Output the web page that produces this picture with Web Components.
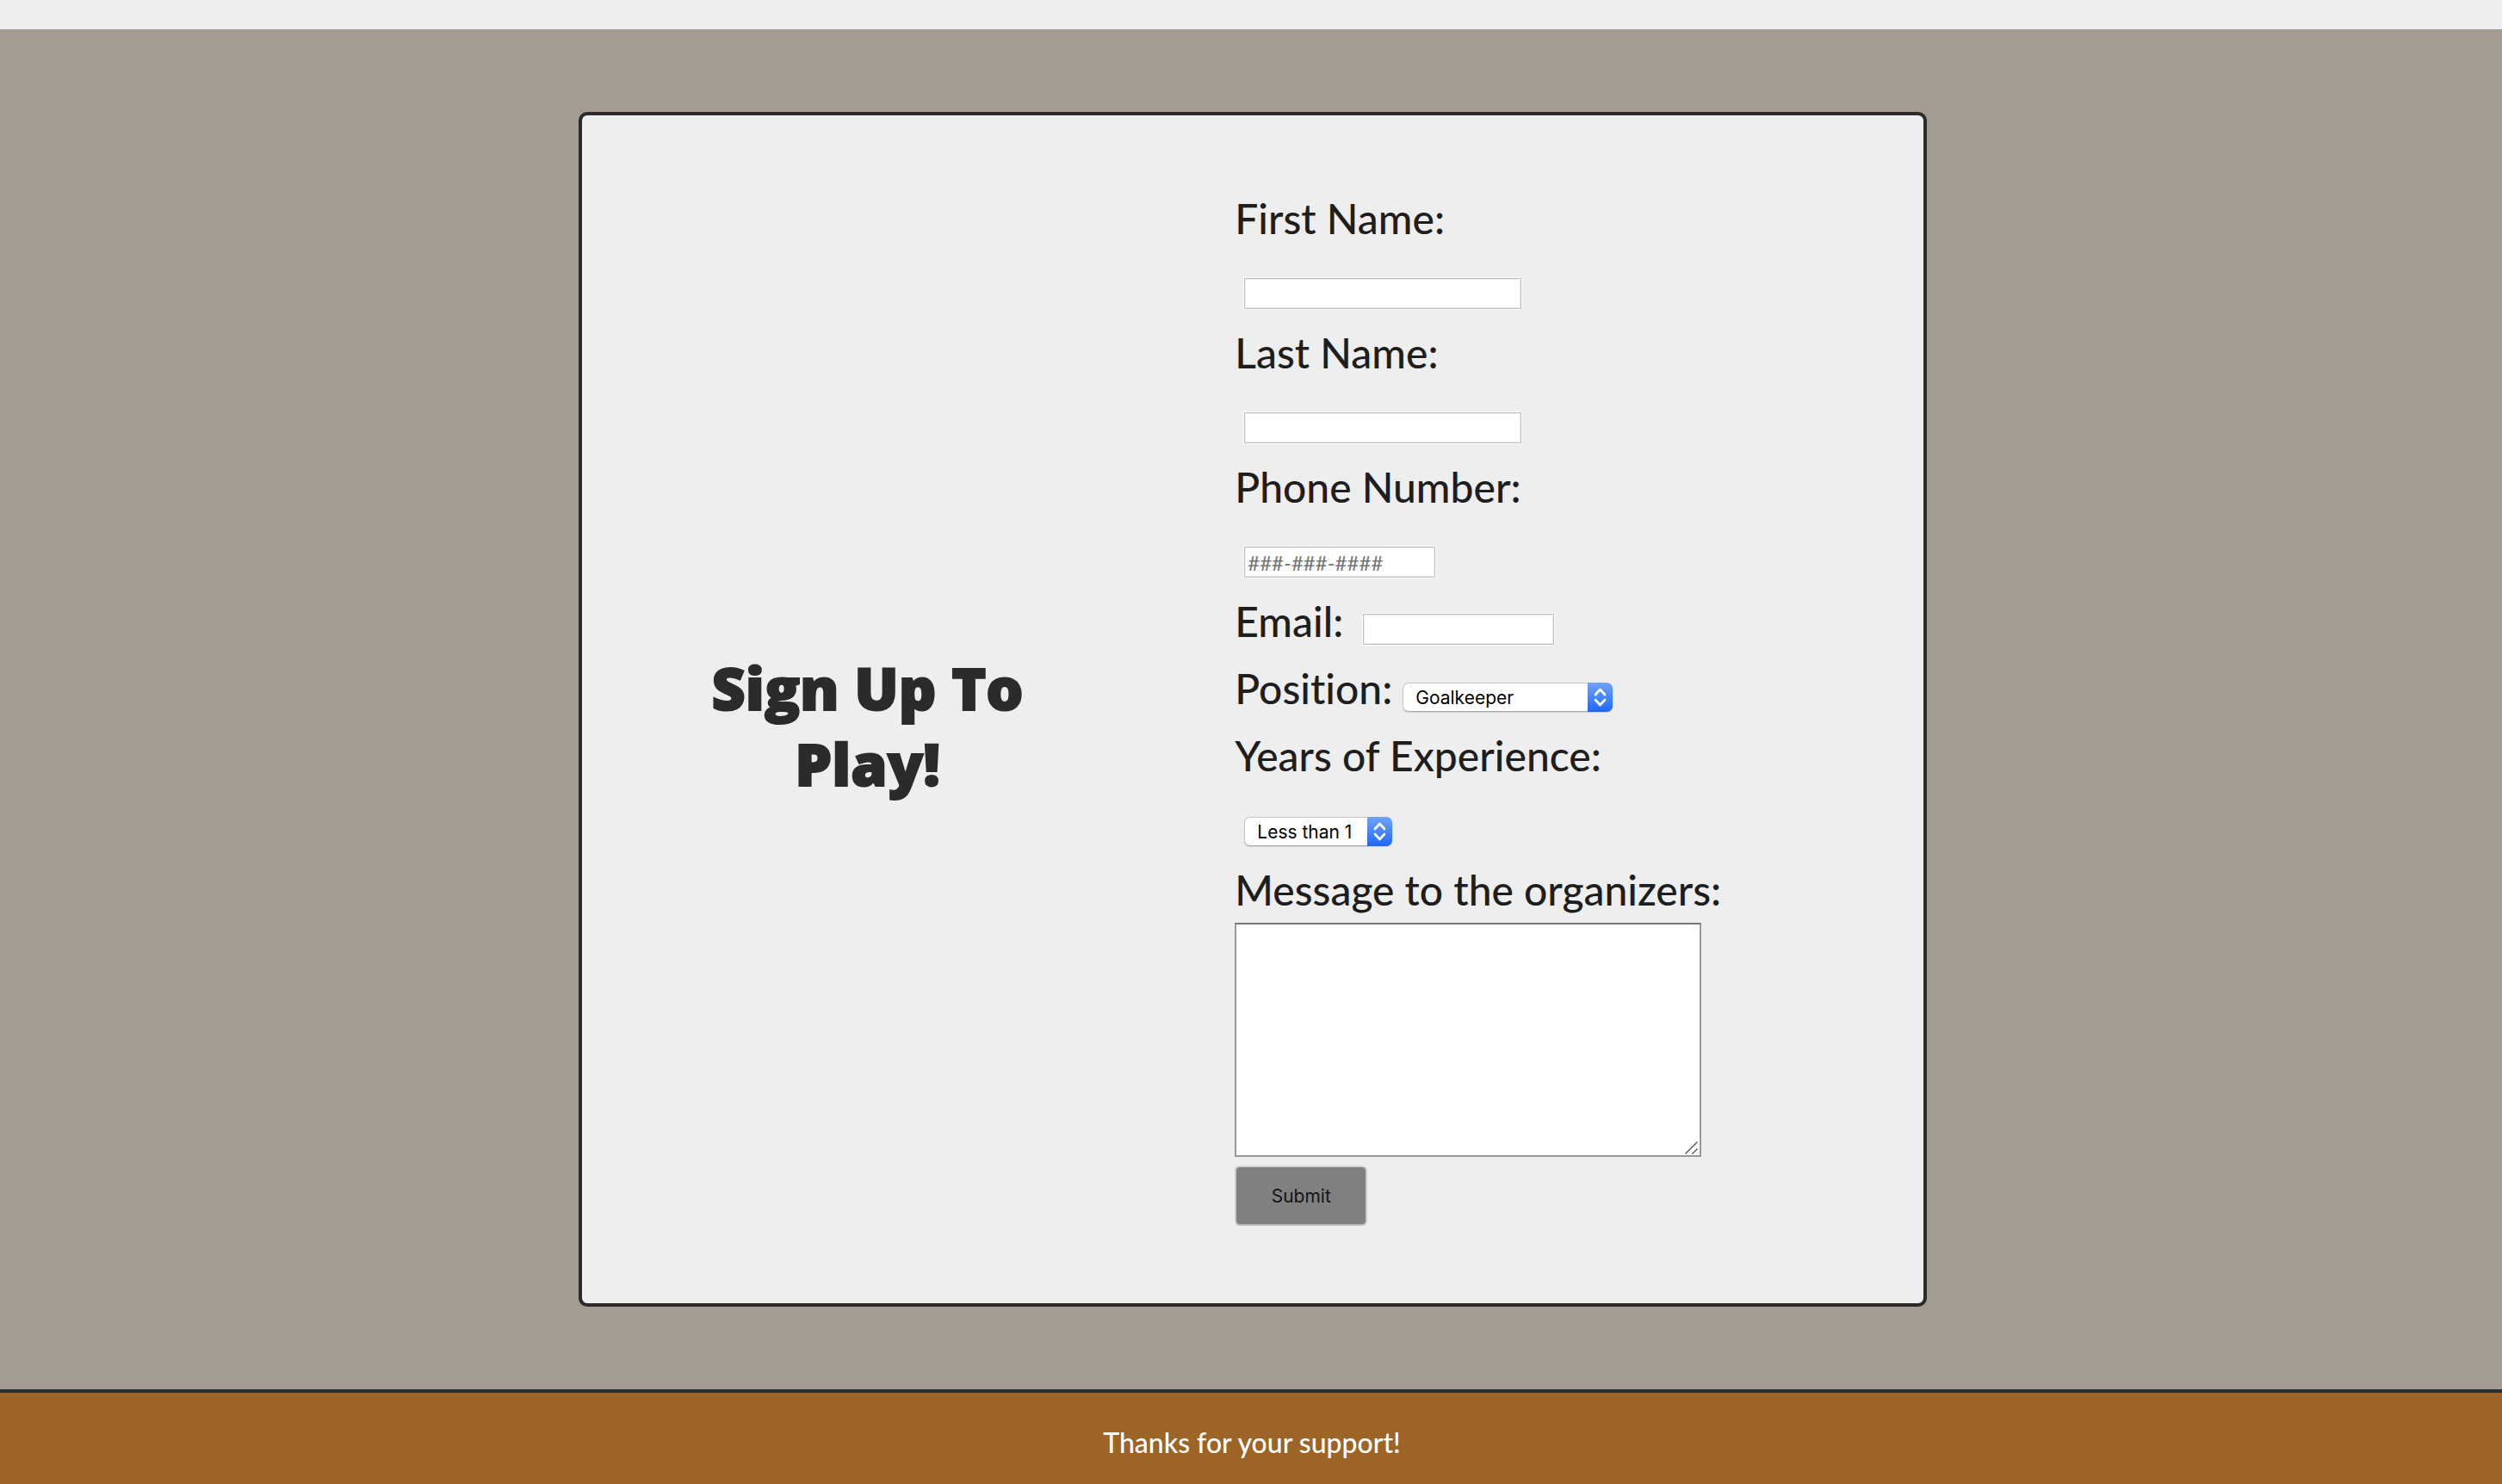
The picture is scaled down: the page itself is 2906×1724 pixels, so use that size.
<!DOCTYPE html>
<html lang="en">
<head>
<meta charset="utf-8">
<title>Sign Up To Play!</title>
<style>
body { margin: 0; background: #eee; color: #1e1e1e; font-family: Lato, sans-serif; font-variant-ligatures: none; }
</style>
</head>
<body>
<signup-page>
  <signup-card>
    <span slot="title">Sign Up To Play!</span>
    <text-field label="First Name:" name="first" stacked wide></text-field>
    <text-field label="Last Name:" name="last" stacked wide></text-field>
    <text-field label="Phone Number:" name="phone" type="tel" placeholder="###-###-####" stacked></text-field>
    <text-field label="Email:" name="email" type="email"></text-field>
    <select-field label="Position:" name="position" options="Goalkeeper|Defender|Midfielder|Forward" wide></select-field>
    <select-field label="Years of Experience:" name="years" options="Less than 1|1 to 3|3 to 5|5 or more" stacked></select-field>
    <message-field label="Message to the organizers:" name="message"></message-field>
    <submit-button>Submit</submit-button>
  </signup-card>
  <page-footer slot="footer">Thanks for your support!</page-footer>
</signup-page>
<script>
class BaseElement extends HTMLElement {
  constructor() {
    super();
    this.attachShadow({ mode: 'open' });
  }
  connectedCallback() {
    this.shadowRoot.innerHTML = this.render();
  }
  attr(name, fallback = '') {
    return this.getAttribute(name) || fallback;
  }
}

const rowStyles = `
  * { box-sizing: border-box; }
  :host { display: flex; align-items: flex-end; }
  :host([stacked]) { flex-direction: column; align-items: flex-start; }
  label { padding-top: 2px; font-size: 48px; line-height: 76px; font-weight: 500; white-space: nowrap; }
`;

customElements.define('signup-page', class extends BaseElement {
  render() {
    return `<style>
      :host { display: flex; flex-direction: column; min-height: 100vh; padding-top: 34px; box-sizing: border-box; }
      main { flex: 1; background: #a49c91; padding: 96px 0 96px 4px; }
    </style>
    <main><slot></slot></main>
    <slot name="footer"></slot>`;
  }
});

customElements.define('signup-card', class extends BaseElement {
  render() {
    return `<style>
      :host {
        display: grid; grid-template-columns: 36% 1fr; column-gap: 175px; align-items: center;
        width: 54%; max-width: 1566px; margin: 0 auto; padding: 80px; box-sizing: border-box;
        background: #eee; border: 4px solid #2b2b2b; border-radius: 10px;
      }
      h1 {
        margin: 0 auto; padding-top: 38px; max-width: 420px; text-align: center; color: #2b2b2b;
        font-family: "Open Sans", sans-serif; font-size: 68px; line-height: 88px; font-weight: 800;
        -webkit-text-stroke: 2px #2b2b2b; stroke-linejoin: round; paint-order: stroke fill;
      }
      form { display: flex; flex-direction: column; margin: 0; }
    </style>
    <h1><slot name="title"></slot></h1>
    <form><slot></slot></form>`;
  }
});

customElements.define('text-field', class extends BaseElement {
  render() {
    return `<style>${rowStyles}
      input {
        width: 224px; height: 38px; margin: 30px 0 10px 22px; padding: 0 4px;
        font: 24px/30px Lato, sans-serif; color: #000; background: #fff;
        border: 1px solid #fff; border-radius: 0; outline: 1px solid #bdbdbd; outline-offset: -2px;
        box-shadow: inset 0 0 0 2px #eee;
      }
      :host([stacked]) input { margin-left: 10px; }
      :host([wide]) input { width: 324px; }
      input::placeholder { color: #757575; opacity: 1; }
    </style>
    <label for="field">${this.attr('label')}</label>
    <input id="field" name="${this.attr('name')}" type="${this.attr('type', 'text')}" placeholder="${this.attr('placeholder')}">`;
  }
});

customElements.define('select-field', class extends BaseElement {
  render() {
    const options = this.attr('options').split('|').map(o => `<option>${o}</option>`).join('');
    return `<style>${rowStyles}
      .box { display: grid; width: 172px; height: 34px; margin: 33px 0 11px 12px; }
      :host([stacked]) .box { margin-left: 11px; }
      :host([wide]) .box { width: 244px; }
      select, svg { grid-area: 1 / 1; }
      select {
        appearance: none; width: 100%; height: 34px; margin: 0; padding: 2px 30px 0 14px;
        font: 21px/30px Inter, sans-serif; color: #000; background: #fff;
        border: 1px solid #c6c6c6; border-bottom-color: #ababab; border-radius: 7px;
        box-shadow: 0 1px 1px #0002;
      }
      svg { justify-self: end; width: 29px; height: 34px; pointer-events: none; z-index: 1; }
    </style>
    <label for="field">${this.attr('label')}</label>
    <div class="box">
      <select id="field" name="${this.attr('name')}">${options}</select>
      <svg viewBox="0 0 29 34" aria-hidden="true">
        <defs><linearGradient id="g" x2="0" y2="1"><stop stop-color="#70a3f7"/><stop offset="1" stop-color="#2067f8"/></linearGradient></defs>
        <path d="M0 0H22a7 7 0 0 1 7 7V27a7 7 0 0 1-7 7H0Z" fill="url(#g)"/>
        <path d="M9 14l5.500-6 5.500 6M9 20l5.500 6 5.500-6" fill="none" stroke="#fff" stroke-width="2.600" stroke-linecap="round" stroke-linejoin="round"/>
      </svg>
    </div>`;
  }
});

customElements.define('message-field', class extends BaseElement {
  render() {
    return `<style>${rowStyles}
      :host { flex-direction: column; align-items: flex-start; }
      .box { display: grid; width: 542px; max-width: 100%; height: 272px; }
      textarea, svg { grid-area: 1 / 1; }
      textarea {
        width: 100%; height: 100%; margin: 0; padding: 4px; resize: none; background: #fff;
        font: 24px/30px Lato, sans-serif; border: 2px solid #9a9a9a; border-top-color: #767676; border-radius: 0;
      }
      svg { place-self: end; width: 20px; height: 20px; pointer-events: none; z-index: 1; }
    </style>
    <label for="field">${this.attr('label')}</label>
    <div class="box">
      <textarea id="field" name="${this.attr('name')}"></textarea>
      <svg viewBox="0 0 20 20" aria-hidden="true"><path d="M1.500 16.500L15.500 2.500M9.500 16.500L15.500 10.500" stroke="#555" stroke-width="1.400"/></svg>
    </div>`;
  }
});

customElements.define('submit-button', class extends BaseElement {
  render() {
    return `<style>
      :host { display: flex; margin: 10px 0; }
      button {
        box-sizing: border-box; width: 154px; height: 70px; margin: 0; padding: 2px 0 0;
        font: 21px/30px Inter, sans-serif; color: #141414; background: #808080;
        border: 2px solid #c9c9c9; border-top-color: #d4d4d4; border-bottom-color: #bababa; border-radius: 6px;
      }
    </style>
    <button type="submit"><slot></slot></button>`;
  }
});

customElements.define('page-footer', class extends BaseElement {
  render() {
    return `<style>
      :host {
        display: block; border-top: 4px solid #2b2b2b; background: #9c6526; color: #fff;
        padding: 29px 0 19px 2px; text-align: center; font-size: 32px; line-height: 58px; font-weight: 500;
      }
    </style>
    <footer><slot></slot></footer>`;
  }
});
</script>
</body>
</html>
